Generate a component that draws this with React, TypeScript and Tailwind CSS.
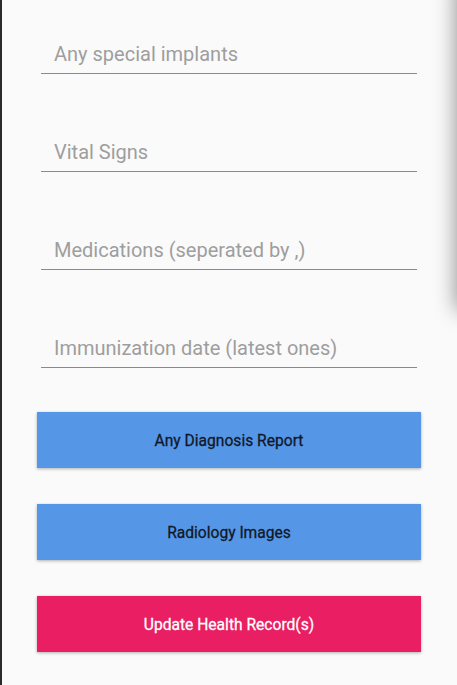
import React from "react";

const fields = [
  "Any special implants",
  "Vital Signs",
  "Medications (seperated by ,)",
  "Immunization date (latest ones)",
];

const buttons = [
  { label: "Any Diagnosis Report", cls: "bg-[#5596e6] text-[#111827]" },
  { label: "Radiology Images", cls: "bg-[#5596e6] text-[#111827]" },
  { label: "Update Health Record(s)", cls: "bg-[#e91e63] text-white" },
];

const App = () => {
  return (
    <div
      className="relative flex w-[457px] h-[685px] overflow-hidden bg-[#fafafa]"
      style={{ fontFamily: "Roboto, 'Liberation Sans', sans-serif" }}
    >
      <div className="w-[2px] shrink-0 bg-[#2a2a2a]" />
      <div className="flex flex-col flex-1">
        <div className="flex flex-col gap-[66px] pt-[42px] pl-[39px] w-[415px]">
          {fields.map((f) => (
            <div key={f} className="border-b border-[#8a8a8a] pb-[7px] pl-[13px]">
              <div className="text-[20px] leading-[24px] text-[#9e9e9e]">{f}</div>
            </div>
          ))}
        </div>
        <div className="flex flex-col gap-[36px] mt-[44px] pl-[35px]">
          {buttons.map((b) => (
            <div
              key={b.label}
              className={`w-[384px] h-[56px] pt-[4px] flex items-center justify-center text-[15.6px] font-normal [-webkit-text-stroke:0.28px_currentColor] shadow-[0_1px_3px_rgba(0,0,0,0.3)] ${b.cls}`}
            >
              {b.label}
            </div>
          ))}
        </div>
      </div>
      {/* shadow from the panel just off the right edge */}
      <div className="absolute left-[457px] top-[-20px] h-[330px] w-[30px] bg-white shadow-[0_0_22px_rgba(0,0,0,0.45)]" />
    </div>
  );
};

export default App;
